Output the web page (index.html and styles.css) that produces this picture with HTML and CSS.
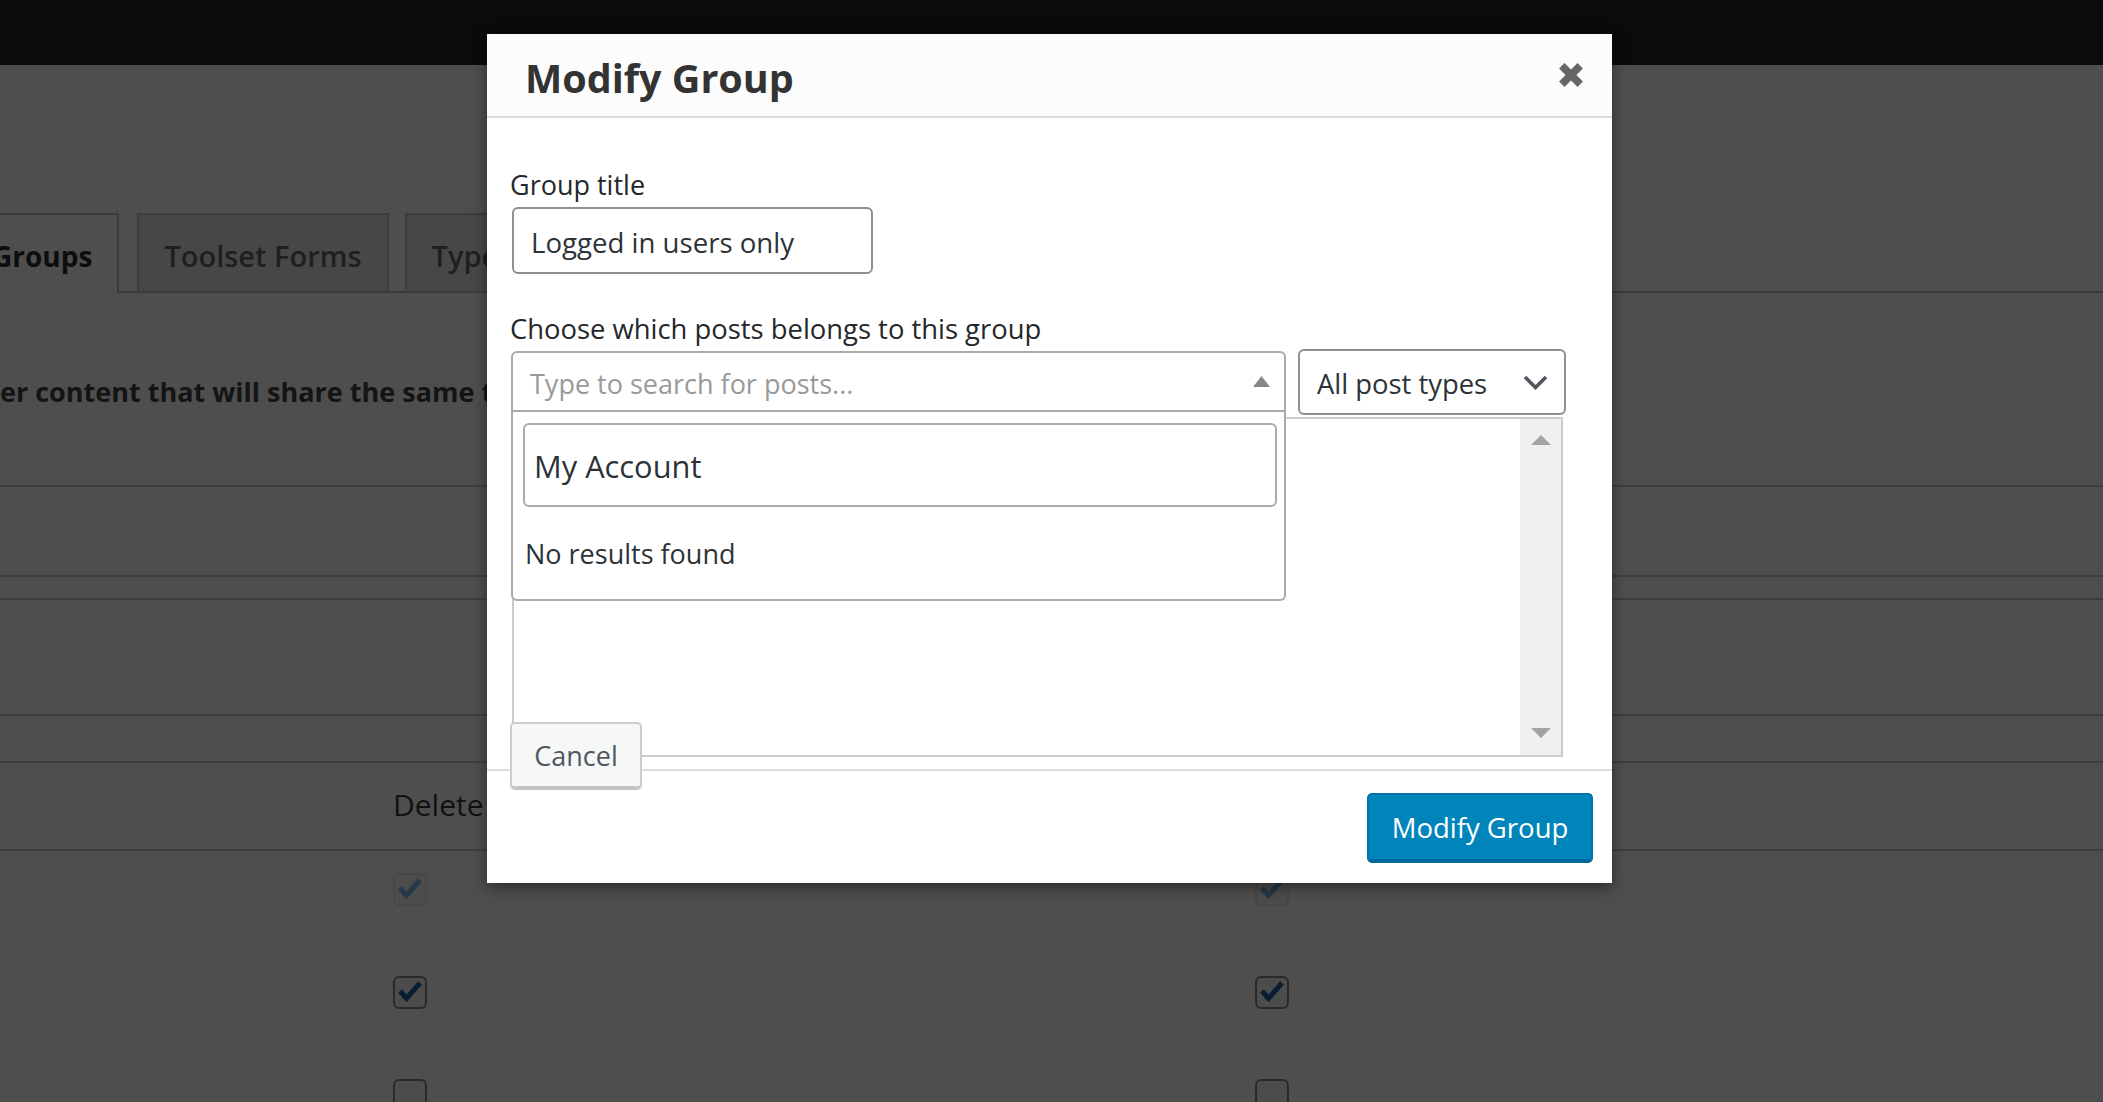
FILE: index.html
```html
<!DOCTYPE html>
<html lang="en">
<head>
<meta charset="utf-8">
<title>Modify Group</title>
<link rel="stylesheet" href="styles.css">
</head>
<body>
<div class="adminbar"></div>
<main class="page">
  <nav class="tabs">
    <span class="tab active">Groups</span>
    <span class="tab">Toolset Forms</span>
    <span class="tab">Types</span>
  </nav>
  <p class="desc">er content that will share the same t</p>
  <div class="rows">
    <div class="rule h0"></div>
    <div class="rule h86"></div>
    <div class="rule h21"></div>
    <div class="rule h113"></div>
    <div class="rule h45"></div>
    <div class="rule head"><span class="col-label">Delete</span></div>
    <div class="cb-rows">
      <div class="cb-row faded">
        <span class="cb"><svg viewBox="0 0 34 33"><path d="M7 15 L13.5 22.5 L27 7"/></svg></span>
        <span class="cb"><svg viewBox="0 0 34 33"><path d="M7 15 L13.5 22.5 L27 7"/></svg></span>
      </div>
      <div class="cb-row">
        <span class="cb"><svg viewBox="0 0 34 33"><path d="M7 15 L13.5 22.5 L27 7"/></svg></span>
        <span class="cb"><svg viewBox="0 0 34 33"><path d="M7 15 L13.5 22.5 L27 7"/></svg></span>
      </div>
      <div class="cb-row">
        <span class="cb"></span>
        <span class="cb"></span>
      </div>
    </div>
  </div>
</main>

<div class="modal">
  <header class="modal-head">
    <h1>Modify Group</h1>
    <span class="close"><svg viewBox="0 0 24 24"><path d="M3.5 3.5 L20.5 20.5 M20.5 3.5 L3.5 20.5"/></svg></span>
  </header>
  <section class="modal-body">
    <label class="lbl">Group title</label>
    <input class="text-input" type="text" value="Logged in users only">
    <label class="lbl lbl2">Choose which posts belongs to this group</label>
    <div class="select-row">
      <div class="s2">
        <div class="s2-box">
          <span class="ph">Type to search for posts...</span>
          <svg class="tri" viewBox="0 0 17 11"><path d="M0 11 L8.5 0 L17 11 Z"/></svg>
        </div>
        <div class="s2-drop">
          <input class="s2-search" type="text" value="My Account">
          <div class="s2-msg">No results found</div>
        </div>
      </div>
      <div class="pt-select">
        <span>All post types</span>
        <svg class="chev" viewBox="0 0 25 15"><path d="M2 2 L12.5 12.5 L23 2"/></svg>
      </div>
    </div>
    <div class="listbox">
      <div class="scrollbar">
        <svg class="sarrow" viewBox="0 0 20 10"><path d="M0 10 L10 0 L20 10 Z"/></svg>
        <svg class="sarrow" viewBox="0 0 20 10"><path d="M0 0 L10 10 L20 0 Z"/></svg>
      </div>
    </div>
  </section>
  <footer class="modal-foot">
    <button class="primary" type="button">Modify Group</button>
  </footer>
  <button class="cancel" type="button">Cancel</button>
</div>
</body>
</html>
```
FILE: styles.css
```css
* { box-sizing: border-box; }
html, body { margin: 0; padding: 0; }
body {
  width: 2103px;
  height: 1102px;
  overflow: hidden;
  position: relative;
  background: #4e4e4e;
  font-family: "Open Sans", "Noto Sans", sans-serif;
}

/* ---------- dimmed background page ---------- */
.adminbar { height: 65px; background: #0a0b0d; }
.page { overflow: hidden; }

.tabs {
  display: flex;
  align-items: flex-start;
  height: 80px;
  margin-top: 148px;
  margin-left: -35px;
  border-bottom: 2px solid #3b3b3b;
}
.tab {
  height: 78px;
  padding: 21px 25px 0;
  margin-left: 18px;
  border: 2px solid #3b3b3b;
  border-bottom: none;
  background: #474747;
  color: #1f1f1f;
  font-size: 29px;
  font-weight: 600;
  line-height: 40px;
  white-space: nowrap;
}
.tab.active { margin-left: 0; height: 80px; background: #4e4e4e; color: #0d0d0d; font-weight: 700; font-size: 28px; }
.tab:nth-child(3) { margin-left: 16px; }

.desc {
  margin: 0;
  height: 192px;
  padding-top: 80px;
  font-size: 27px;
  font-weight: 700;
  line-height: 38px;
  color: #141414;
  white-space: nowrap;
}

.rule { border-bottom: 2px solid #3e3e3e; }
.h0 { height: 2px; border-bottom: none; background: #3e3e3e; }
.h86 { height: 90px; }
.h21 { height: 23px; }
.h113 { height: 116px; }
.h45 { height: 47px; }
.head { height: 88px; padding-left: 393px; line-height: 84px; }
.col-label { font-size: 30px; color: #111; }

.cb-rows { display: flex; flex-direction: column; gap: 70px; padding-top: 22px; }
.cb-row { display: flex; gap: 828px; padding-left: 393px; }
.cb {
  width: 34px;
  height: 33px;
  border: 2px solid #2a2a2a;
  border-radius: 6px;
  background: #4c4c4c;
  display: flex;
}
.cb svg { margin: -2px; width: 34px; height: 33px; flex: none; }
.cb path { fill: none; stroke: #0a1e31; stroke-width: 5; }
.cb-row.faded .cb { border-color: #474747; }
.cb-row.faded .cb path { stroke: #263849; }

/* ---------- modal ---------- */
.modal {
  position: absolute;
  left: 487px;
  top: 34px;
  width: 1125px;
  height: 849px;
  background: #fff;
  box-shadow: 0 4px 14px rgba(0, 0, 0, 0.45);
  display: flex;
  flex-direction: column;
}
.modal-head {
  height: 84px;
  flex: none;
  background: #fcfcfc;
  border-bottom: 2px solid #dddddd;
  display: flex;
  align-items: center;
  justify-content: space-between;
  padding: 8px 28px 0 38px;
}
.modal-head h1 {
  margin: 0;
  font-size: 39.5px;
  font-weight: 700;
  line-height: 1;
  color: #333;
}
.close { width: 26px; height: 26px; margin-top: -8px; display: block; }
.close svg { width: 26px; height: 26px; display: block; }
.close path { stroke: #666; stroke-width: 7; fill: none; }

.modal-body { flex: 1; padding: 48px 23px 0; position: relative; }
.lbl { display: block; font-size: 27px; line-height: 38px; color: #23282d; }
.lbl2 { margin-top: 36px; font-size: 27.4px; }
.text-input {
  display: block;
  margin: 3px 0 0 2px;
  width: 361px;
  height: 67px;
  border: 2px solid #8c8f94;
  border-radius: 6px;
  padding: 2px 17px 0;
  font-family: inherit;
  font-size: 27.6px;
  color: #2c3338;
  background: #fff;
  outline: none;
}

.select-row { display: flex; align-items: flex-start; gap: 12px; margin-left: 1px; width: 1055px; }
.s2 { position: relative; width: 775px; margin-top: 3px; z-index: 2; }
.s2-box {
  height: 61px;
  border: 2px solid #aaaaaa;
  border-radius: 6px 6px 0 0;
  display: flex;
  align-items: center;
  justify-content: space-between;
  padding: 4px 14px 0 17px;
  background: #fff;
}
.ph { font-size: 27px; color: #999; }
.tri { width: 17px; height: 11px; display: block; margin-top: -4px; }
.tri path { fill: #888; }

.s2-drop {
  position: absolute;
  top: 100%;
  left: 0;
  width: 100%;
  height: 189px;
  background: #fff;
  border: 2px solid #aaaaaa;
  border-top: none;
  border-radius: 0 0 6px 6px;
  padding: 11px 7px 0 10px;
}
.s2-search {
  display: block;
  width: 100%;
  height: 84px;
  border: 2px solid #aaaaaa;
  border-radius: 6px;
  padding: 2px 9px 0;
  font-family: inherit;
  font-size: 30.8px;
  color: #2c3338;
  outline: none;
  background: #fff;
}
.s2-msg { margin: 28px 0 0 2px; font-size: 27px; line-height: 38px; color: #2c3338; }

.pt-select {
  width: 268px;
  height: 66px;
  margin-top: 1px;
  border: 2px solid #8c8f94;
  border-radius: 6px;
  display: flex;
  align-items: center;
  justify-content: space-between;
  padding: 2px 16px 0 17px;
  font-size: 27.4px;
  color: #2c3338;
}
.chev { width: 25px; height: 15px; display: block; margin-top: -2px; }
.chev path { fill: none; stroke: #50575e; stroke-width: 3.6; }

.listbox {
  margin: 2px 0 0 2px;
  width: 1051px;
  height: 340px;
  border: 2px solid #cccccc;
  display: flex;
  justify-content: flex-end;
}
.scrollbar {
  width: 41px;
  background: #f0f0f0;
  display: flex;
  flex-direction: column;
  justify-content: space-between;
  align-items: center;
  padding: 16px 0 17px;
}
.sarrow { width: 20px; height: 10px; display: block; }
.sarrow path { fill: #a3a3a3; }

.modal-foot {
  height: 114px;
  flex: none;
  border-top: 2px solid #dddddd;
  display: flex;
  justify-content: flex-end;
  padding: 22px 19px 0 0;
}
.primary {
  width: 226px;
  height: 70px;
  background: #0085ba;
  border: 2px solid #0073aa;
  border-bottom: 4px solid #006799;
  border-radius: 5px;
  color: #fff;
  font-family: inherit;
  font-size: 27.5px;
  padding: 0;
}
.cancel {
  position: absolute;
  left: 23px;
  top: 688px;
  width: 132px;
  height: 68px;
  background: #f6f7f7;
  border: 2px solid #cccccc;
  border-bottom: 4px solid #c4c4c4;
  border-radius: 5px;
  color: #50575e;
  font-family: inherit;
  font-size: 27px;
  padding: 0;
  z-index: 3;
}
```
